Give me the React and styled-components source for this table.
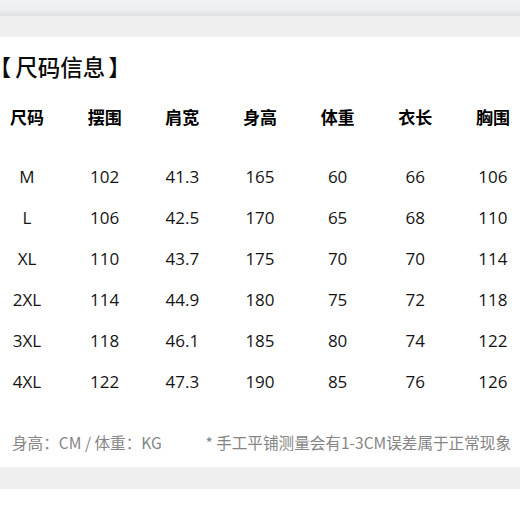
import React from "react";
import styled, { createGlobalStyle } from "styled-components";

const GlobalStyle = createGlobalStyle`
  html, body {
    margin: 0;
    padding: 0;
    background: #ffffff;
  }
  body {
    font-family: "Open Sans", "Noto Sans CJK SC", sans-serif;
    color: #111;
  }
`;

const Page = styled.div`
  width: 520px;
  display: flex;
  flex-direction: column;
`;

const TopBar = styled.div`
  height: 16px;
  background: linear-gradient(to bottom, #f1f2f6 0%, #eeeff3 60%, #dfe0e4 100%);
`;

const Band = styled.div`
  height: ${(p) => p.h}px;
  background: #efefef;
`;

const Card = styled.div`
  background: #ffffff;
  padding: 13px 0 10px;
  display: flex;
  flex-direction: column;
`;

const Title = styled.div`
  height: 32px;
  line-height: 32px;
  font-family: "Noto Sans CJK SC", sans-serif;
  font-size: 22.5px;
  font-weight: 500;
  color: #0c0c0c;
  margin: 0 0 16px 0;
  font-feature-settings: "halt" 1;
`;

const Bracket = styled.span`
  margin-right: ${(p) => p.gap || 0}px;
  margin-left: ${(p) => p.lead || 0}px;
`;

const Row = styled.div`
  display: grid;
  grid-template-columns: repeat(7, 54px);
  justify-content: space-between;
  align-items: center;
  height: ${(p) => (p.head ? 40 : 41)}px;
  margin-top: ${(p) => (p.head ? -2 : 0)}px;
  margin-bottom: ${(p) => (p.head ? 20 : 0)}px;
`;

const Cell = styled.div`
  text-align: center;
  font-family: ${(p) =>
    p.head ? `"Noto Sans CJK SC", sans-serif` : `"Open Sans", "Noto Sans CJK SC", sans-serif`};
  font-size: 17px;
  font-weight: ${(p) => (p.head ? 700 : 400)};
  color: ${(p) => (p.head ? "#000" : "#141414")};
  white-space: nowrap;
`;

const Footer = styled.div`
  display: flex;
  justify-content: space-between;
  align-items: center;
  height: 30px;
  margin-top: 25px;
  padding: 0 9px 0 12px;
  font-family: "Noto Sans CJK SC", sans-serif;
  font-size: 15.6px;
  color: #858585;
  white-space: nowrap;
`;

const headers = ["尺码", "摆围", "肩宽", "身高", "体重", "衣长", "胸围"];

const rows = [
  ["M", "102", "41.3", "165", "60", "66", "106"],
  ["L", "106", "42.5", "170", "65", "68", "110"],
  ["XL", "110", "43.7", "175", "70", "70", "114"],
  ["2XL", "114", "44.9", "180", "75", "72", "118"],
  ["3XL", "118", "46.1", "185", "80", "74", "122"],
  ["4XL", "122", "47.3", "190", "85", "76", "126"],
];

export default function App() {
  return (
    <Page>
      <GlobalStyle />
      <TopBar />
      <Band h={21} />
      <Card>
        <Title>
          <Bracket gap={4}>【</Bracket>尺码信息<Bracket lead={3}>】</Bracket>
        </Title>
        <Row head>
          {headers.map((h) => (
            <Cell head key={h}>
              {h}
            </Cell>
          ))}
        </Row>
        {rows.map((r) => (
          <Row key={r[0]}>
            {r.map((v, i) => (
              <Cell key={i}>{v}</Cell>
            ))}
          </Row>
        ))}
        <Footer>
          <span>身高：CM / 体重：KG</span>
          <span>* 手工平铺测量会有1-3CM误差属于正常现象</span>
        </Footer>
      </Card>
      <Band h={22} />
    </Page>
  );
}
